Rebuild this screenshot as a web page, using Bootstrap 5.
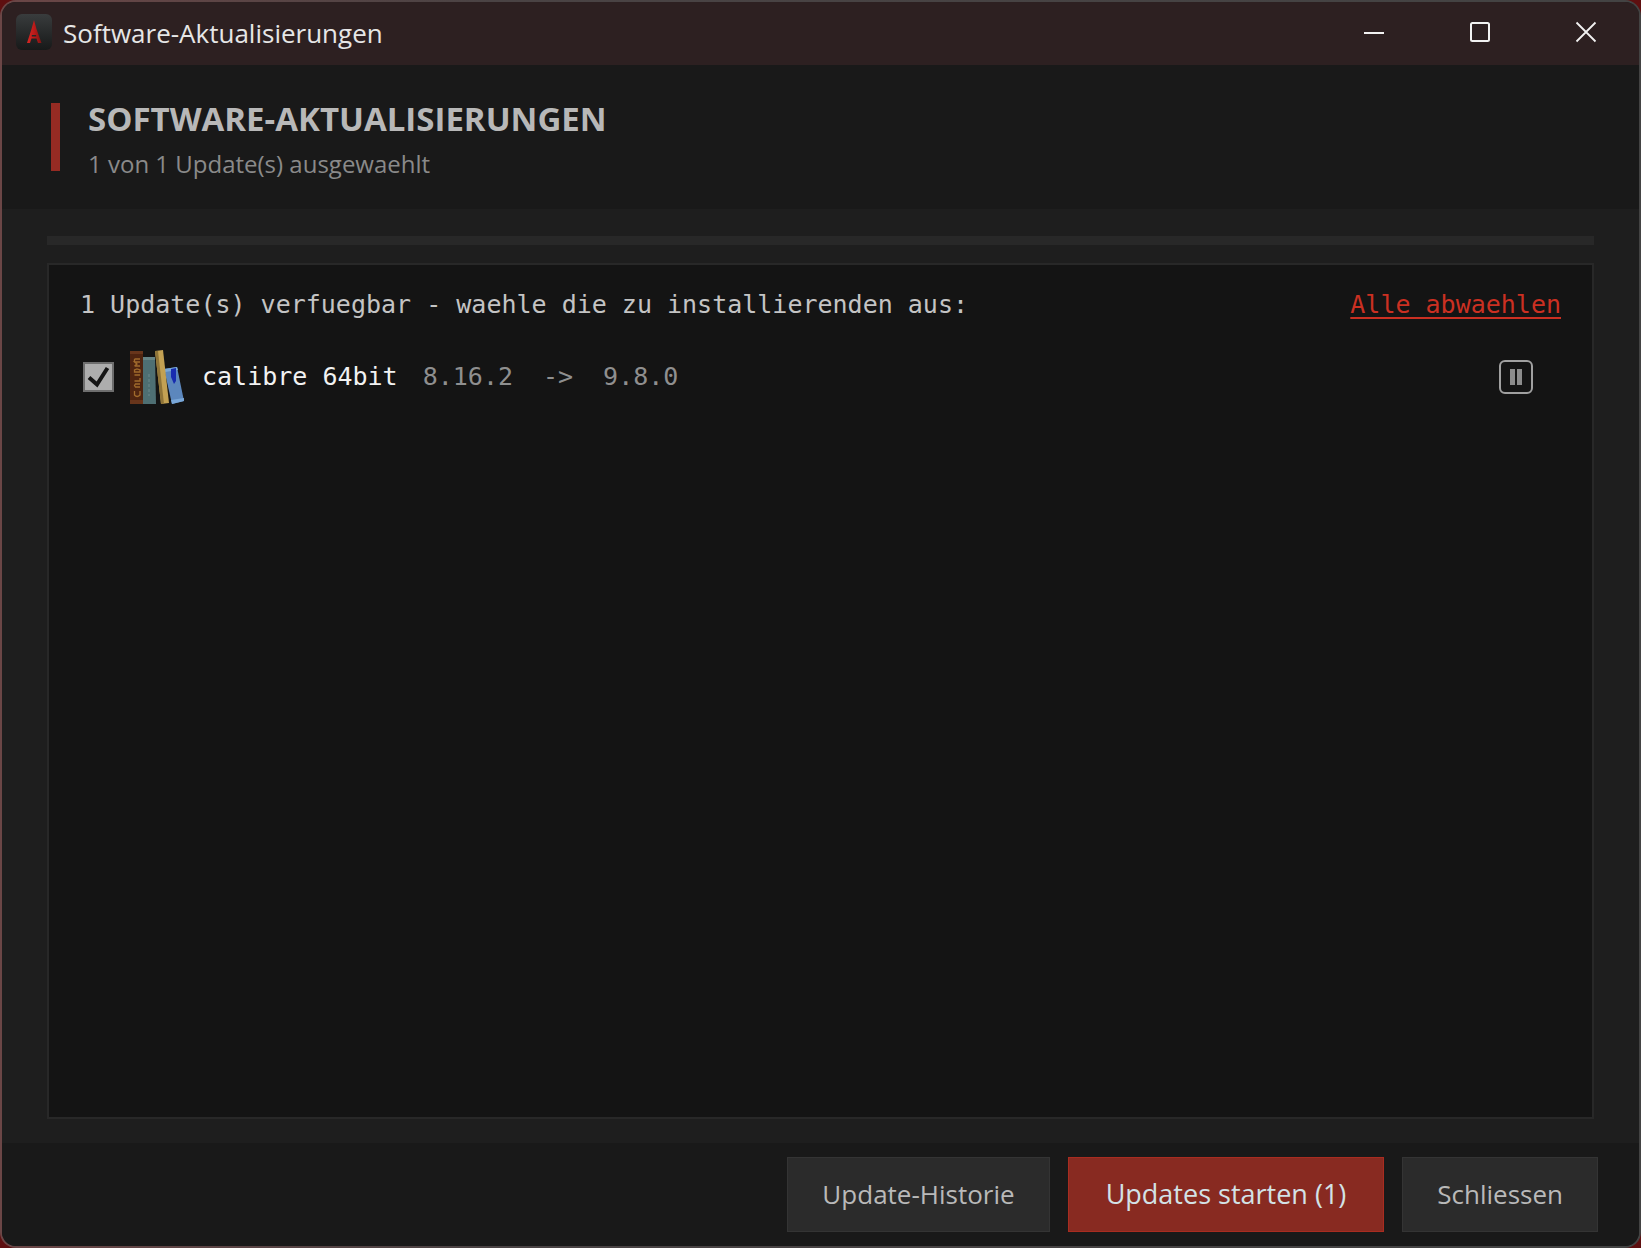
<!DOCTYPE html>
<html lang="de" data-bs-theme="dark">
<head>
<meta charset="utf-8">
<meta name="viewport" content="width=device-width, initial-scale=1">
<title>Software-Aktualisierungen</title>
<link href="https://cdn.jsdelivr.net/npm/bootstrap@5.3.0/dist/css/bootstrap.min.css" rel="stylesheet">
<style>
  body { background: #5e0f10; font-family: "Open Sans", "Noto Sans", sans-serif; font-size: 24px; line-height: 32px; }
  .frame { padding: 2px; border-radius: 16px; background: linear-gradient(90deg, #6b4646 0, #4a4344 30%, #434343 100%); }
  .app-window { border-radius: 14px; background: #1e1e1e; overflow: hidden; }
  .title-bar { height: 63px; padding-left: 14px; background: #2d2021; color: #e6e6e6; }
  .title-area { padding-bottom: 3px; gap: 7px; }
  .title-text { font-size: 26px; font-weight: 400; padding-top: 2px; }
  .caption-btn { width: 106px; height: 60px; border: 0; background: transparent; color: #f2f2f2; }
  .caption-btn:hover { background: #43302f; }
  .page-head { background: #191919; padding: 36px 48px 29px 49px; gap: 28px; }
  .accent { width: 9px; height: 68px; margin-top: 2px; background: #962b23; }
  .page-title { font-size: 33px; line-height: 36px; font-weight: 700; color: #b8b8b8; }
  .page-sub { color: #8a8a8a; margin-top: 11px; }
  .page-main { padding: 27px 45px 24px; }
  .track { height: 9px; border-radius: 0; background: #282828; }
  .update-list { margin-top: 18px; border: 2px solid #282828; background: #141414; padding: 24px 31px;
    font-family: "DejaVu Sans Mono", "Liberation Mono", monospace; font-size: 25px; line-height: 32px; color: #c4c4c4; }
  .link-toggle { color: #cb3022; text-underline-offset: 4px; text-decoration-thickness: 2px; }
  .link-toggle:hover { color: #e04535; }
  .update-row { padding: 29px 28px 0 3px; }
  .update-check.form-check-input[type=checkbox] { width: 31px; height: 30px; margin: 0; border: 2px solid #6e6e6e; border-radius: 0; background-color: #adadad; }
  .update-check.form-check-input:checked { background: #adadad url("data:image/svg+xml,%3Csvg xmlns='http://www.w3.org/2000/svg' viewBox='0 0 27 26'%3E%3Cpath d='M4 13.500L12 20.500L22.500 4' fill='none' stroke='%23141414' stroke-width='4'/%3E%3C/svg%3E") center / 100% 100% no-repeat; }
  .app-name { color: #f2f2f2; margin-left: 18px; }
  .version { color: #8f8f8f; margin-left: 25px; gap: 30px; }
  .pause-btn { width: 34px; height: 34px; border: 2px solid #a0a0a0; border-radius: 6px; background: transparent; color: #8c8c8c; }
  .page-foot { background: #191919; padding: 14px 41px 14px; gap: 18px; }
  .action { height: 75px; padding: 0 34px; border: 1px solid #343434; border-radius: 0; background: #2b2b2b; color: #b9b9b9; font-size: 26px; }
  .action:hover { background: #363636; color: #d8d8d8; border-color: #444; }
  .action-main { font-size: 27px; padding: 0 37px; background: #882a21; border-color: #a92c20; color: #d3e2e6; }
  .action-main:hover { background: #9a3127; color: #fff; border-color: #b93224; }
</style>
</head>
<body>
<div class="frame min-vh-100 d-flex">
  <div class="app-window flex-grow-1 d-flex flex-column">
    <header class="title-bar d-flex align-items-start">
      <div class="title-area d-flex align-items-center h-100">
        <svg width="40" height="36" viewBox="0 0 40 36" aria-hidden="true">
          <defs>
            <linearGradient id="tile" x1="0" y1="0" x2="0" y2="1"><stop offset="0" stop-color="#393c3d"/><stop offset="1" stop-color="#171919"/></linearGradient>
            <linearGradient id="spire" x1="0" y1="0" x2="1" y2="0"><stop offset="0" stop-color="#d92723"/><stop offset=".55" stop-color="#b71918"/><stop offset="1" stop-color="#7d1414"/></linearGradient>
          </defs>
          <rect width="36" height="36" rx="6" fill="url(#tile)"/>
          <path d="M18 6L20.500 15L25.500 29H22L20.500 24.500H15.500L14 29H11L15.500 15ZM15.800 21V22.500H20.200V21Z" fill="url(#spire)" fill-rule="evenodd"/>
        </svg>
        <span class="title-text">Software-Aktualisierungen</span>
      </div>
      <div class="ms-auto d-flex">
        <button type="button" class="caption-btn" aria-label="Minimieren"><svg class="d-block mx-auto" width="22" height="22" viewBox="0 0 22 22"><path d="M1 12H21" stroke="currentColor" stroke-width="2"/></svg></button>
        <button type="button" class="caption-btn" aria-label="Maximieren"><svg class="d-block mx-auto" width="22" height="22" viewBox="0 0 22 22"><rect x="2" y="2" width="18" height="18" rx="1.500" fill="none" stroke="currentColor" stroke-width="2"/></svg></button>
        <button type="button" class="caption-btn" aria-label="Fenster schliessen"><svg class="d-block mx-auto" width="22" height="22" viewBox="0 0 22 22"><path d="M1.500 1.500L20.500 20.500M20.500 1.500L1.500 20.500" stroke="currentColor" stroke-width="1.800"/></svg></button>
      </div>
    </header>

    <section class="page-head d-flex">
      <div class="accent"></div>
      <div>
        <h1 class="page-title mb-0">SOFTWARE-AKTUALISIERUNGEN</h1>
        <p class="page-sub mb-0">1 von 1 Update(s) ausgewaehlt</p>
      </div>
    </section>

    <main class="page-main flex-grow-1 d-flex flex-column">
      <div class="progress track" role="progressbar" aria-label="Fortschritt" aria-valuenow="0" aria-valuemin="0" aria-valuemax="100"></div>
      <section class="update-list flex-grow-1">
        <div class="d-flex justify-content-between">
          <span>1 Update(s) verfuegbar - waehle die zu installierenden aus:</span>
          <a href="#" class="link-toggle">Alle abwaehlen</a>
        </div>
        <div class="update-row d-flex align-items-center">
          <input class="form-check-input update-check" type="checkbox" id="calibre" checked>
          <label class="d-flex align-items-center ms-3" for="calibre">
            <svg width="54" height="54" viewBox="0 0 54 54" aria-hidden="true">
              <rect y="1" width="13" height="53" fill="#4f2410"/>
              <path d="M0 1H13V4H0ZM0 50H13V54H0Z" fill="#68351b"/>
              <g fill="none" stroke="#a06a2c" stroke-width="1.300">
                <path d="M4.500 41V45Q7 48 10 45V41M10 37H5.500L4.500 35.500L5.500 34H10M4.500 31H10V28M4.500 25H10M4.500 22H10V20L7 19L4.500 20ZM4.500 16H10M4.500 16L7 14L4.500 12H10M4.500 9H10M4.500 9V12"/>
              </g>
              <path d="M13 7H25L26 54H13Z" fill="#4e6f73"/>
              <path d="M13 7H25V10H13Z" fill="#668486"/>
              <path d="M19 24V46" stroke="#5c7c80" stroke-width="2" stroke-dasharray="3 2"/>
              <path d="M34 19L47 17L54 51L42 54Z" fill="#5c87bd"/>
              <path d="M34 19L47 17L48 20L35 22ZM41 50L54 48V51L42 54Z" fill="#79a7d8"/>
              <path d="M41 19L46 18L46 31L44 34L41 27Z" fill="#172caf"/>
              <path d="M25 1L33 0L39 53L31 54Z" fill="#c3a153"/>
              <path d="M25 1L28 1L34 54H31Z" fill="#8f7438"/>
            </svg>
            <span class="app-name">calibre 64bit</span>
          </label>
          <span class="version d-flex flex-wrap"><span>8.16.2</span><span>-&gt;</span><span>9.8.0</span></span>
          <button type="button" class="pause-btn ms-auto p-0" aria-label="Update pausieren"><svg class="d-block mx-auto" width="12" height="16" viewBox="0 0 12 16"><path d="M0 0H5V16H0ZM7 0H12V16H7Z" fill="currentColor"/></svg></button>
        </div>
      </section>
    </main>

    <footer class="page-foot d-flex flex-wrap justify-content-end">
      <button type="button" class="btn action">Update-Historie</button>
      <button type="button" class="btn action action-main">Updates starten (1)</button>
      <button type="button" class="btn action">Schliessen</button>
    </footer>
  </div>
</div>
<script src="https://cdn.jsdelivr.net/npm/bootstrap@5.3.0/dist/js/bootstrap.bundle.min.js"></script>
</body>
</html>
